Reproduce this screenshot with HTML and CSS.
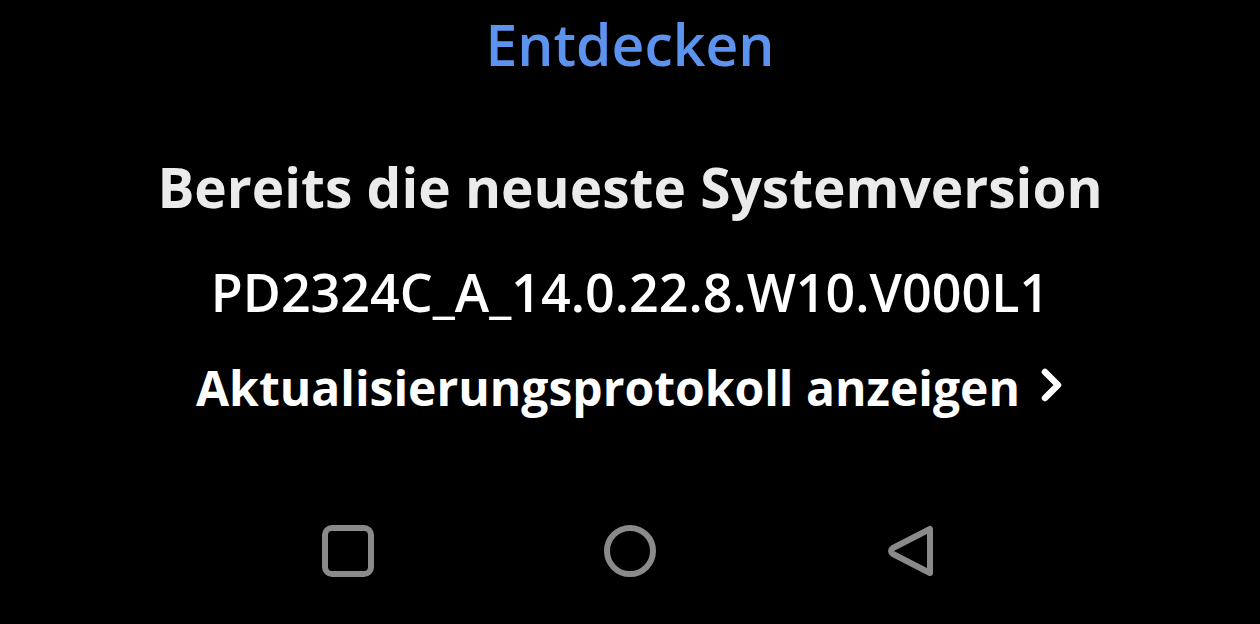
FILE: index.html
```html
<!DOCTYPE html>
<html lang="de">
<head>
  <meta charset="UTF-8">
  <title>Systemupdate</title>
  <meta name="viewport" content="width=device-width, initial-scale=1.0">
  <link rel="stylesheet" href="styles.css">
</head>
<body>

<div class="screen">
  <div class="tab">Entdecken</div>

  <div class="status">
    <h1>Bereits die neueste Systemversion</h1>
    <p class="version">PD2324C_A_14.0.22.8.W10.V000L1</p>
    <a class="log" href="#">Aktualisierungsprotokoll anzeigen
      <svg class="chevron" viewBox="0 0 24 36" width="24" height="36">
        <path d="M5 5 L18 18 L5 31" fill="none" stroke="#fff" stroke-width="6.5" stroke-linecap="round" stroke-linejoin="round"/>
      </svg>
    </a>
  </div>

  <nav class="navbar">
    <svg viewBox="0 0 56 56" width="56" height="56">
      <rect x="5" y="5" width="46" height="46" rx="7" fill="none" stroke="#8a8a8a" stroke-width="6"/>
    </svg>
    <svg viewBox="0 0 56 56" width="56" height="56">
      <circle cx="28" cy="28" r="23" fill="none" stroke="#8a8a8a" stroke-width="6"/>
    </svg>
    <svg viewBox="0 0 56 56" width="56" height="56">
      <path d="M46 6 L46 50 L9 31 Q5 28 9 25 Z" fill="none" stroke="#8a8a8a" stroke-width="6" stroke-linejoin="round"/>
    </svg>
  </nav>
</div>

</body>
</html>
```

FILE: styles.css
```css
body { margin: 0; background: #000; font-family: 'Open Sans', 'Noto Sans', sans-serif; color: #fff; }
.screen { width: 1260px; height: 624px; display: flex; flex-direction: column; align-items: center; overflow: hidden; }

.tab { color: #5b93ef; font-size: 57px; font-weight: 600; line-height: 1; margin-top: 16px; }

.status { display: flex; flex-direction: column; align-items: center; margin-top: 86px; }
.status h1 { margin: 0; font-size: 55px; font-weight: 700; line-height: 1; color: #ebebeb; }
.version { margin: 52px 0 0; font-size: 52px; font-weight: 600; line-height: 1; }
.log { margin-top: 46px; display: flex; align-items: center; gap: 20px; color: #fff; text-decoration: none; font-size: 48px; font-weight: 700; line-height: 1; }
.chevron { margin-top: -6px; }

.navbar { margin-top: auto; margin-bottom: 45px; display: flex; gap: 226px; }
```
